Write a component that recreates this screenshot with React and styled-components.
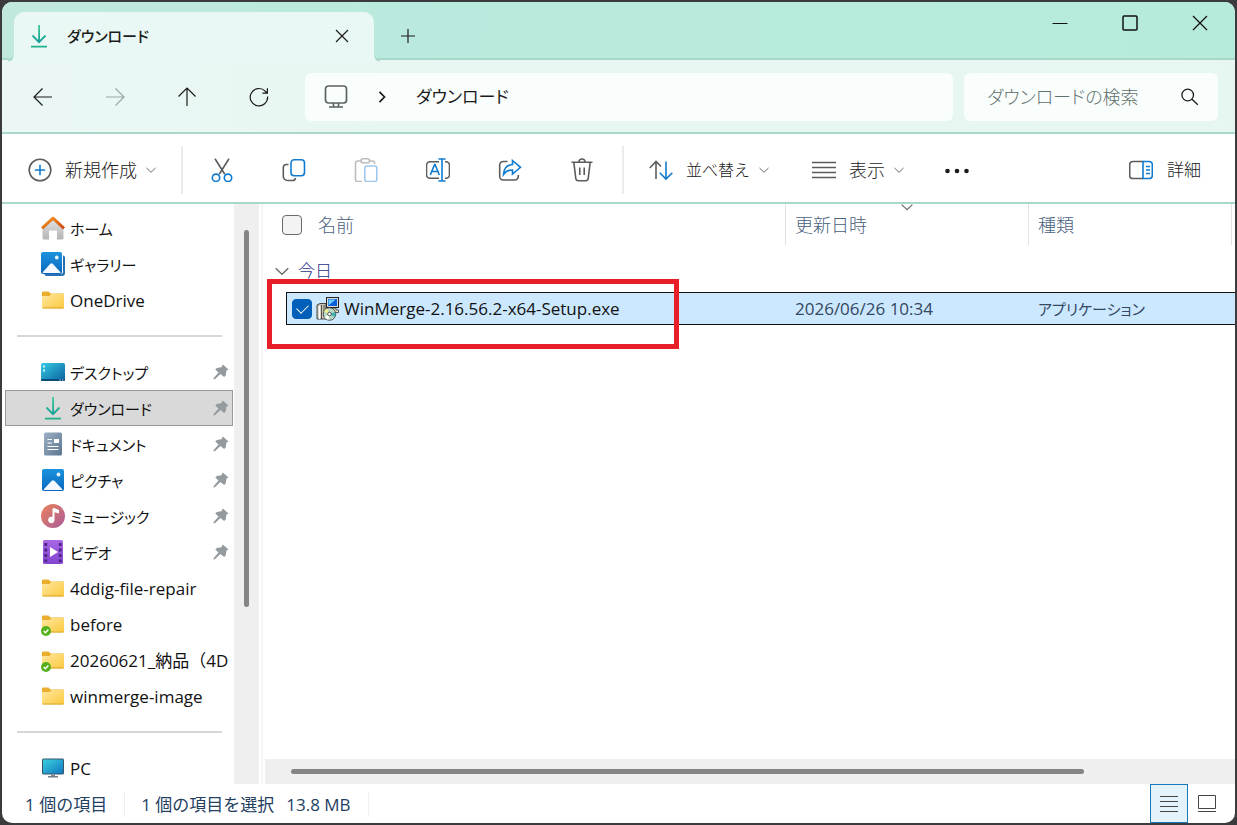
import React from "react";
import styled, { createGlobalStyle, css, ThemeProvider } from "styled-components";

const theme = {
  blue: "#0f7bd0",
  ink: "#1b1b1b",
  grey: "#5c5c5c",
  mint: "#a9d8ca",
  header: "#4a5f7d",
  track: "#efefef",
  thumb: "#858585",
};

const quickAccess = [
  { icon: "home", name: "ホーム", kana: true },
  { icon: "gallery", name: "ギャラリー", kana: true },
  { icon: "folder", name: "OneDrive" },
];

const pinned = [
  { icon: "desktop", name: "デスクトップ", kana: true, pin: true },
  { icon: "download", name: "ダウンロード", kana: true, pin: true, selected: true },
  { icon: "document", name: "ドキュメント", kana: true, pin: true },
  { icon: "picture", name: "ピクチャ", kana: true, pin: true },
  { icon: "music", name: "ミュージック", kana: true, pin: true },
  { icon: "video", name: "ビデオ", kana: true, pin: true },
  { icon: "folder", name: "4ddig-file-repair" },
  { icon: "synced", name: "before" },
  { icon: "synced", name: "20260621_納品（4D" },
  { icon: "folder", name: "winmerge-image" },
];

const App = () => {
  return (
    <ThemeProvider theme={theme}>
      <GlobalStyle />
      <Styles.Window>
        <Styles.TitleBar>
          <Styles.Tab>
            <DownloadIcon />
            <Styles.TabTitle>ダウンロード</Styles.TabTitle>
            <Styles.TabButton aria-label="タブを閉じる">
              <LineIcon size={14} width={1.2} d="M1 1l12 12M13 1L1 13" />
            </Styles.TabButton>
          </Styles.Tab>
          <Styles.NewTab aria-label="新しいタブ">
            <LineIcon size={16} width={1.2} d="M8 1v14M1 8h14" />
          </Styles.NewTab>
          <Styles.Controls>
            <Styles.ControlButton aria-label="最小化">
              <LineIcon size={16} width={1} d="M0.5 8.5h15" />
            </Styles.ControlButton>
            <Styles.ControlButton aria-label="最大化">
              <svg width="16" height="16" viewBox="0 0 16 16" fill="none" stroke="#111" strokeWidth="1.5">
                <rect x="1" y="1" width="14" height="14" rx="1" />
              </svg>
            </Styles.ControlButton>
            <Styles.ControlButton aria-label="閉じる">
              <LineIcon size={16} width={1.3} d="M1 1l14 14M15 1L1 15" />
            </Styles.ControlButton>
          </Styles.Controls>
        </Styles.TitleBar>

        <Styles.NavBar>
          <Styles.NavButton aria-label="戻る">
            <LineIcon size={20} width={1.2} d="M19 10H1.5M9.5 1.5L1 10l8.500 8.500" />
          </Styles.NavButton>
          <Styles.NavButton aria-label="進む" disabled>
            <LineIcon size={20} width={1.2} d="M1 10h17.500M10.500 1.500L19 10l-8.500 8.500" />
          </Styles.NavButton>
          <Styles.NavButton aria-label="上へ">
            <LineIcon size={20} width={1.2} d="M10 19V1.500M1.500 9.500L10 1l8.500 8.500" />
          </Styles.NavButton>
          <Styles.NavButton aria-label="更新">
            <LineIcon size={20} width={1.2} d="M18.600 9.500a8.700 8.700 0 1 1-2.400-5.300L18.200 6M18.400 1.200v5h-5" />
          </Styles.NavButton>
          <Styles.Address>
            <svg width="24" height="24" viewBox="0 0 24 24" fill="none" stroke="#5d6362" strokeWidth="1.7">
              <rect x="1.500" y="1" width="21" height="17" rx="3" />
              <path d="M9.500 18v3.500M14.500 18v3.500M5 22h14" />
            </svg>
            <Styles.Crumb aria-label="PC">
              <LineIcon size={12} width={1.7} d="M3.500 0.800L8.500 6l-5 5.200" />
            </Styles.Crumb>
            <Styles.Place>ダウンロード</Styles.Place>
          </Styles.Address>
          <Styles.Search>
            <input type="text" aria-label="ダウンロードの検索" placeholder="ダウンロードの検索" />
            <LineIcon size={18} width={1.3} d="M12.500 7a5.800 5.800 0 1 1-11.600 0a5.800 5.800 0 0 1 11.600 0M11 11.200l5.800 5.600" />
          </Styles.Search>
        </Styles.NavBar>

        <Styles.ToolBar>
          <Styles.TextButton>
            <Glyph>
              <circle cx="12" cy="12" r="10.800" />
              <path className="accent" d="M12 6.800v10.400M6.800 12h10.400" />
            </Glyph>
            新規作成
            <Chevron />
          </Styles.TextButton>
          <Styles.Divider />
          <Styles.ToolButton aria-label="切り取り">
            <Glyph>
              <path d="M5 0.800l9.800 15.400M19 0.800L9.200 16.200" />
              <g className="accent">
                <circle cx="6" cy="19.800" r="3.700" />
                <circle cx="18" cy="19.800" r="3.700" />
              </g>
            </Glyph>
          </Styles.ToolButton>
          <Styles.ToolButton aria-label="コピー">
            <Glyph>
              <path d="M6.500 6.500H4.500a3.200 3.200 0 0 0-3.200 3.200v8.500a4.300 4.300 0 0 0 4.300 4.300h4.900a3 3 0 0 0 3-2.500" />
              <rect className="accent" x="9" y="1.800" width="13.500" height="16" rx="3.200" />
            </Glyph>
          </Styles.ToolButton>
          <Styles.ToolButton aria-label="貼り付け" disabled>
            <Glyph>
              <path d="M7 3H3.500a2 2 0 0 0-2 2v16.500a2 2 0 0 0 2 2H8M15.500 3h3a2 2 0 0 1 2 2v1" />
              <rect x="7" y="0.800" width="8.500" height="4" rx="2" />
              <rect className="accent" x="10.800" y="8" width="12" height="15.500" rx="2" />
            </Glyph>
          </Styles.ToolButton>
          <Styles.ToolButton aria-label="名前の変更">
            <Glyph>
              <path d="M13 3.800H4a3.500 3.500 0 0 0-3.500 3.500v9.400A3.500 3.500 0 0 0 4 20.200h9M19 3.800h1a3.500 3.500 0 0 1 3.500 3.500v9.400a3.500 3.500 0 0 1-3.500 3.500h-1" />
              <path className="accent" d="M4.300 17L8.600 6.500h.5L13.300 17M5.800 13.500h6M16 1v22M12.500 1h7M12.500 23h7" />
            </Glyph>
          </Styles.ToolButton>
          <Styles.ToolButton aria-label="共有">
            <Glyph>
              <path d="M9.500 3.500H5.200a3.500 3.500 0 0 0-3.500 3.500v11.500A3.500 3.500 0 0 0 5.200 22h11.600a3.500 3.500 0 0 0 3.500-3.500V17" />
              <path className="accent" d="M14.500 2.500l8 6.800-8 6.700v-4c-4-.2-6.500 1-9 4.500.3-5.500 3.500-9.500 9-10z" />
            </Glyph>
          </Styles.ToolButton>
          <Styles.ToolButton aria-label="削除">
            <Glyph>
              <path d="M1.500 4.200h21M3.800 4.200l2 16.300a2.500 2.500 0 0 0 2.500 2.200h7.400a2.500 2.500 0 0 0 2.500-2.200l2-16.300M9 4a3 3 0 0 1 6 0M9.800 9.500v7.500M14.200 9.500v7.500" />
            </Glyph>
          </Styles.ToolButton>
          <Styles.Divider />
          <Styles.TextButton $small>
            <Glyph>
              <path d="M7 21V3.500M0.800 10L7 3.500l5 5" />
              <path className="accent" d="M17 3.500V21M10.800 14.800L17 21l6.300-6.300" />
            </Glyph>
            並べ替え
            <Chevron />
          </Styles.TextButton>
          <Styles.TextButton>
            <Glyph>
              <path d="M0 4.500h24M0 9.500h24M0 14.500h24M0 19.500h24" />
            </Glyph>
            表示
            <Chevron />
          </Styles.TextButton>
          <Styles.ToolButton aria-label="もっと見る" $narrow>
            <svg width="26" height="24" viewBox="0 0 26 24" fill="#1b1b1b">
              <circle cx="3.500" cy="13" r="2.300" />
              <circle cx="13" cy="13" r="2.300" />
              <circle cx="22.500" cy="13" r="2.300" />
            </svg>
          </Styles.ToolButton>
          <Styles.Details>
            <Glyph>
              <path d="M14 3.500H4a3.300 3.300 0 0 0-3.300 3.300v10.400A3.300 3.300 0 0 0 4 20.500h10" />
              <path className="accent" d="M14 3.500h6a3.300 3.300 0 0 1 3.300 3.300v10.400a3.300 3.300 0 0 1-3.300 3.300h-6zM17 8.500h4M17 12h4M17 15.500h4" />
            </Glyph>
            詳細
          </Styles.Details>
        </Styles.ToolBar>

        <Styles.Body>
          <Styles.SideBar aria-label="ナビゲーション">
            {quickAccess.map((item) => <SideItem key={item.name} {...item} />)}
            <Styles.Rule />
            {pinned.map((item) => <SideItem key={item.name} {...item} />)}
            <Styles.Rule />
            <SideItem icon="pc" name="PC" />
          </Styles.SideBar>
          <Styles.VTrack><Styles.VThumb /></Styles.VTrack>

          <Styles.Content>
            <Styles.Files>
              <Styles.Table>
                <colgroup>
                  <col width="23" />
                  <col />
                  <col width="243" />
                  <col width="203" />
                  <col width="4" />
                </colgroup>
                <thead>
                  <tr>
                    <Styles.Th colSpan={2} $first>
                      <Styles.NameHead>
                        <Styles.Check type="checkbox" aria-label="すべて選択" />
                        名前
                      </Styles.NameHead>
                    </Styles.Th>
                    <Styles.Th>
                      更新日時
                      <Styles.SortMark><Chevron size={12} /></Styles.SortMark>
                    </Styles.Th>
                    <Styles.Th>種類</Styles.Th>
                    <Styles.Th />
                  </tr>
                </thead>
                <tbody>
                  <tr>
                    <Styles.GroupCell colSpan={5}>
                      <Styles.GroupButton><Chevron size={14} />今日</Styles.GroupButton>
                    </Styles.GroupCell>
                  </tr>
                  <tr>
                    <td />
                    <Styles.Td $first>
                      <Styles.FileName>
                        <Styles.Check type="checkbox" defaultChecked />
                        <SetupIcon />
                        WinMerge-2.16.56.2-x64-Setup.exe
                      </Styles.FileName>
                    </Styles.Td>
                    <Styles.Td>2026/06/26 10:34</Styles.Td>
                    <Styles.Td $kana>アプリケーション</Styles.Td>
                    <Styles.Td />
                  </tr>
                </tbody>
              </Styles.Table>
              <Styles.Marker />
            </Styles.Files>
            <Styles.HTrack><Styles.HThumb /></Styles.HTrack>
          </Styles.Content>
        </Styles.Body>

        <Styles.StatusBar>
          <Styles.Status>1 個の項目</Styles.Status>
          <Styles.Status>
            <span>1 個の項目を選択</span>
            <span>13.8 MB</span>
          </Styles.Status>
          <Styles.Views>
            <Styles.ViewButton aria-label="詳細表示" $active>
              <LineIcon size={20} width={1} d="M1 2.500h18M1 7.500h18M1 12.500h18M1 17.500h18" />
            </Styles.ViewButton>
            <Styles.ViewButton aria-label="大アイコン">
              <LineIcon size={20} width={1} d="M1.500 1.500h17v13h-17zM1 17.500h18" />
            </Styles.ViewButton>
          </Styles.Views>
        </Styles.StatusBar>
      </Styles.Window>
    </ThemeProvider>
  );
};

export default App;

const SideItem = ({ icon, name, kana, pin, selected }) => {
  const Icon = icons[icon];
  return (
    <Styles.Item href="#" $selected={selected}>
      <Icon />
      <Styles.ItemName $kana={kana}>{name}</Styles.ItemName>
      {pin && <PinIcon />}
    </Styles.Item>
  );
};

// plain stroked icon drawn from one path
const LineIcon = ({ size, d, width = 1.4 }) => (
  <svg width={size} height={size} viewBox={`0 0 ${size} ${size}`} fill="none" stroke="currentColor" strokeWidth={width}>
    <path d={d} />
  </svg>
);

const Chevron = ({ size = 10 }) => (
  <svg width={size} height={size} viewBox="0 0 10 10" fill="none" stroke="#6b6b6b">
    <path d="M0.500 3L5 7.300 9.500 3" />
  </svg>
);

const Glyph = ({ children }) => (
  <Styles.Glyph width="24" height="24" viewBox="0 0 24 24">{children}</Styles.Glyph>
);

const DownloadIcon = () => (
  <svg width="24" height="24" viewBox="0 0 24 24" fill="none" strokeWidth="1.800">
    <defs>
      <linearGradient id="dl" x1="0" y1="0" x2="0" y2="24" gradientUnits="userSpaceOnUse">
        <stop offset="0" stopColor="#3fcf9b" />
        <stop offset="0.800" stopColor="#149c96" />
      </linearGradient>
    </defs>
    <path stroke="url(#dl)" d="M12.100 1v17M5.500 11.500l6.500 6.700 6.500-6.700" />
    <path stroke="#22b08c" d="M4 22.600h16" />
  </svg>
);

const PinIcon = () => (
  <svg width="16" height="16" viewBox="0 0 16 16" fill="#949b9f">
    <path d="M9.800 0.600l5.700 4.900-2 1.100-.8 4.800-1.600 1.600-3.600-3.100-5.600 5.400-1.500.3.300-1.500 4.800-5.700L2.300 5.500l1.500-1.600 4.500-.6z" />
  </svg>
);

const Folder = () => (
  <>
    <defs>
      <linearGradient id="folder" x1="0" y1="0" x2="1" y2="1">
        <stop offset="0" stopColor="#ffe7a0" />
        <stop offset="1" stopColor="#fbc93d" />
      </linearGradient>
    </defs>
    <path fill="#e9ae2c" d="M1 4.500a1 1 0 0 1 1-1h5.500l2 2H22a1 1 0 0 1 1 1V9H1z" />
    <path fill="url(#folder)" d="M1 8h7.500l2-2H22a1 1 0 0 1 1 1v12.500a1 1 0 0 1-1 1H2a1 1 0 0 1-1-1z" />
    <path stroke="#dda52e" d="M1.500 20h21" />
  </>
);

const Picture = () => (
  <>
    <defs>
      <linearGradient id="pic" x1="0" y1="0" x2="0" y2="1">
        <stop offset="0" stopColor="#1b93de" />
        <stop offset="1" stopColor="#0a67bd" />
      </linearGradient>
    </defs>
    <rect x="1" y="1" width="22" height="22" rx="2" fill="url(#pic)" />
    <path fill="#f3f9ff" d="M2.500 21.500l8.300-8.700a1.800 1.800 0 0 1 2.500 0l8.300 8.700a2 2 0 0 1-1 .5H3.500a2 2 0 0 1-1-.5z" />
    <circle cx="17.500" cy="6.500" r="1.900" fill="#e6f4ff" />
  </>
);

const ItemSvg = ({ children }) => (
  <svg width="24" height="24" viewBox="0 0 24 24" fill="none">{children}</svg>
);

const icons = {
  download: DownloadIcon,
  picture: () => <ItemSvg><Picture /></ItemSvg>,
  folder: () => <ItemSvg><Folder /></ItemSvg>,
  synced: () => (
    <ItemSvg>
      <Folder />
      <circle cx="5" cy="19" r="5" fill="#56b01c" />
      <path stroke="#fff" strokeWidth="1.500" d="M2.700 19l1.700 1.700 3-3.200" />
    </ItemSvg>
  ),
  home: () => (
    <ItemSvg>
      <defs>
        <linearGradient id="wall" x1="0" y1="0" x2="0" y2="1">
          <stop offset="0" stopColor="#e6e6e6" />
          <stop offset="1" stopColor="#b3b3b3" />
        </linearGradient>
        <linearGradient id="roof" x1="0" y1="0" x2="1" y2="1">
          <stop offset="0" stopColor="#f39a22" />
          <stop offset="1" stopColor="#cf4a12" />
        </linearGradient>
      </defs>
      <path fill="url(#wall)" d="M1.500 11.500L12 2l10.500 9.500V22a1.500 1.500 0 0 1-1.500 1.500h-5v-9H8v9H3A1.500 1.500 0 0 1 1.500 22z" />
      <path stroke="url(#roof)" strokeWidth="3" strokeLinejoin="round" d="M1 12.300L12 2.200l11 10.100" />
    </ItemSvg>
  ),
  gallery: () => (
    <ItemSvg>
      <path fill="#2a6fb0" d="M22 3.500a2 2 0 0 1 2 2V21a3 3 0 0 1-3 3H5.500a2 2 0 0 1-2-2H20a2 2 0 0 0 2-2z" />
      <svg x="0" y="0" width="21" height="22" viewBox="1 1 22 22" preserveAspectRatio="none"><Picture /></svg>
    </ItemSvg>
  ),
  desktop: () => (
    <ItemSvg>
      <defs>
        <linearGradient id="desk" x1="0" y1="0" x2="1" y2="1">
          <stop offset="0" stopColor="#35cbe3" />
          <stop offset="1" stopColor="#0b5f9e" />
        </linearGradient>
      </defs>
      <rect y="3" width="24" height="18" rx="1.500" fill="url(#desk)" />
      <path fill="#c9f5fb" d="M2 5.500h2v2H2zM2 9.500h2v2H2z" />
      <path fill="#0a4c7c" d="M0 19h24v.5a1.500 1.500 0 0 1-1.500 1.500h-21A1.500 1.500 0 0 1 0 19.500z" />
      <path fill="#bfe7f7" d="M18.500 19.500h1.300v1h-1.300zM21 19.500h1.300v1H21z" />
    </ItemSvg>
  ),
  document: () => (
    <ItemSvg>
      <defs>
        <linearGradient id="doc" x1="0" y1="0" x2="1" y2="1">
          <stop offset="0" stopColor="#9cb0c6" />
          <stop offset="1" stopColor="#5c7690" />
        </linearGradient>
      </defs>
      <rect x="3" y="0.500" width="18" height="23" rx="1.500" fill="url(#doc)" />
      <path stroke="#fff" strokeWidth="1.200" d="M6.500 7.500h4.500M6.500 11h4.500M6.500 14.500h11M6.500 17.500h11" />
      <rect x="13" y="7" width="5" height="4" fill="#fff" />
    </ItemSvg>
  ),
  music: () => (
    <ItemSvg>
      <defs>
        <linearGradient id="music" x1="0" y1="0" x2="1" y2="1">
          <stop offset="0" stopColor="#ec8458" />
          <stop offset="1" stopColor="#a95a9c" />
        </linearGradient>
      </defs>
      <circle cx="12" cy="12" r="12" fill="url(#music)" />
      <path fill="#fff" d="M11.500 4.500l1.500-.5 5 2v3.500l-4.500-1.200v7.700a3.200 3.200 0 1 1-2-3z" />
    </ItemSvg>
  ),
  video: () => (
    <ItemSvg>
      <defs>
        <linearGradient id="video" x1="0" y1="0" x2="0" y2="1">
          <stop offset="0" stopColor="#a866e6" />
          <stop offset="1" stopColor="#8344cf" />
        </linearGradient>
      </defs>
      <rect x="2" width="20" height="24" rx="1.500" fill="url(#video)" />
      <path stroke="#4b2583" strokeWidth="2.800" strokeDasharray="3 2.500" d="M4.800 3v19M19.200 3v19" />
      <path fill="#fff" d="M9 7l8 5-8 5z" />
    </ItemSvg>
  ),
  pc: () => (
    <ItemSvg>
      <defs>
        <linearGradient id="pc" x1="0" y1="0" x2="1" y2="1">
          <stop offset="0" stopColor="#3dd2de" />
          <stop offset="1" stopColor="#0f75c0" />
        </linearGradient>
      </defs>
      <rect x="1.500" y="3" width="21" height="15" rx="0.500" fill="url(#pc)" stroke="#3b5567" />
      <path fill="#7f8b93" d="M10 18.500h4v2h-4z" />
      <path stroke="#5d6d78" strokeWidth="1.300" d="M7 20.800h10" />
    </ItemSvg>
  ),
};

// installer: box, disc and monitor
const SetupIcon = () => (
  <svg width="24" height="24" viewBox="0 0 24 24">
    <path fill="#c9c5b4" stroke="#222" strokeWidth="0.800" d="M1 8l3-1.500h6V22H1z" />
    <path stroke="#fff" strokeWidth="1.500" d="M3.500 9v13" />
    <path stroke="#333" strokeWidth="0.800" d="M5.500 8v14M8 8v6" />
    <rect x="10.500" y="0.500" width="12" height="10" fill="#d8d8d8" stroke="#222" />
    <rect x="12" y="2" width="9" height="7" fill="#0b5fd8" />
    <path fill="#6fd0ff" d="M12.500 2.500h7l-7 6z" />
    <path fill="#e8e4c8" stroke="#222" strokeWidth="0.700" d="M13 11h7v2h2.500v2.500H14z" />
    <circle cx="13.500" cy="17" r="6.300" fill="#b9d7c4" stroke="#333" strokeWidth="0.800" />
    <path fill="#eef08a" d="M13.500 17L8 14.500a6 6 0 0 1 3-3z" />
    <path fill="#35b4b0" d="M13.500 17l5.600-2a6 6 0 0 1-.6 5z" />
    <path fill="#fff" d="M13.500 17l-1 5.800a6 6 0 0 1-4-2.500z" />
    <circle cx="13.500" cy="17" r="1.800" fill="#fff" stroke="#333" strokeWidth="0.800" />
  </svg>
);

const GlobalStyle = createGlobalStyle`
  * {
    box-sizing: border-box;
  }
  body {
    margin: 0;
    background: #3b3b3d;
    color: #1b1b1b;
    font: 17px/24px "Open Sans", "Noto Sans CJK JP", sans-serif;
  }
  button, input {
    font: inherit;
    font-feature-settings: inherit;
    color: inherit;
    border: 0;
    margin: 0;
    padding: 0;
    background: none;
  }
  svg {
    display: block;
    flex: none;
  }
`;

const flexCenter = css`
  display: flex;
  align-items: center;
  justify-content: center;
`;

// katakana labels are set with proportional metrics
const kanaText = css`
  font-size: 15px;
  font-feature-settings: "palt";
`;

const Styles = {
  Window: styled.main`
  display: flex;
  flex-direction: column;
  height: calc(100vh - 4px);
  margin: 2px;
  border-radius: 10px;
  overflow: hidden;
  background: #fff;
  `,

  TitleBar: styled.header`
  display: flex;
  height: 58px;
  padding-left: 12px;
  border-bottom: 2px solid ${({ theme }) => theme.mint};
  background: linear-gradient(100deg, #c1e8df, #b8eade 40%, #b6ebdb);
  `,
  Tab: styled.div`
  position: relative;
  display: flex;
  align-items: center;
  gap: 16px;
  width: 360px;
  height: 48px;
  margin-top: 10px;
  padding: 0 12px 0 13px;
  border-radius: 10px 10px 0 0;
  background: #e9f8f4;
  box-shadow: 0 2px 0 #e9f8f4;
  /* curved feet that join the tab to the bar below */
  &::before, &::after {
    content: "";
    position: absolute;
    bottom: -2px;
    width: 6px;
    height: 6px;
  }
  &::before {
    right: 100%;
    background: radial-gradient(circle at 0 0, transparent 4px, ${({ theme }) => theme.mint} 5px, #e9f8f4 6px);
  }
  &::after {
    left: 100%;
    background: radial-gradient(circle at 100% 0, transparent 4px, ${({ theme }) => theme.mint} 5px, #e9f8f4 6px);
  }
  `,
  TabTitle: styled.span`
  flex: 1;
  ${kanaText}
  font-weight: 500;
  `,
  TabButton: styled.button`
  ${flexCenter}
  width: 40px;
  height: 32px;
  `,
  NewTab: styled.button`
  ${flexCenter}
  width: 68px;
  padding-top: 12px;
  `,
  Controls: styled.div`
  display: flex;
  align-items: flex-start;
  margin-left: auto;
  `,
  ControlButton: styled.button`
  ${flexCenter}
  width: 70px;
  height: 42px;
  color: #111;
  `,

  NavBar: styled.nav`
  display: flex;
  align-items: center;
  height: 74px;
  padding: 1px 17px 0 5px;
  border-bottom: 2px solid ${({ theme }) => theme.mint};
  background: linear-gradient(90deg, #eaf7f4, #e6f6f1);
  `,
  NavButton: styled.button`
  ${flexCenter}
  width: 72px;
  height: 48px;
  &:disabled {
    color: #9aa9a5;
  }
  `,
  Address: styled.div`
  display: flex;
  align-items: center;
  flex: 1;
  height: 48px;
  margin-left: 10px;
  padding-left: 19px;
  border-radius: 6px;
  background: #f9fdfc;
  `,
  Crumb: styled.button`
  ${flexCenter}
  width: 68px;
  height: 32px;
  `,
  Place: styled.span`
  ${kanaText}
  font-size: 17px;
  `,
  Search: styled.label`
  display: flex;
  align-items: center;
  width: 254px;
  height: 48px;
  margin-left: 11px;
  padding: 0 19px 0 23px;
  border-radius: 6px;
  background: #f9fdfc;
  ${kanaText}
  font-size: 18px;
  input {
    flex: 1;
    min-width: 0;
    outline: 0;
  }
  input::placeholder {
    color: #60706c;
    font-weight: 300;
    opacity: 1;
  }
  `,

  ToolBar: styled.div`
  display: flex;
  align-items: center;
  height: 70px;
  border-bottom: 2px solid ${({ theme }) => theme.mint};
  padding: 3px 34px 0 4px;
  font-weight: 300;
  `,
  Glyph: styled.svg`
  fill: none;
  stroke: ${({ theme }) => theme.grey};
  stroke-width: 1.6;
  .accent {
    stroke: ${({ theme }) => theme.blue};
  }
  `,
  TextButton: styled.button`
  display: flex;
  align-items: center;
  gap: 13px;
  height: 48px;
  padding: 0 21px 0 22px;
  font-size: ${({ $small }) => ($small ? "16px" : "18px")};
  white-space: nowrap;
  svg:last-child {
    margin-left: -4px;
  }
  `,
  ToolButton: styled.button`
  ${flexCenter}
  width: ${({ $narrow }) => ($narrow ? "64px" : "72px")};
  height: 48px;
  &:disabled svg {
    opacity: 0.4;
  }
  `,
  Details: styled.button`
  ${flexCenter}
  gap: 14px;
  height: 48px;
  margin-left: auto;
  `,
  Divider: styled.span`
  width: 2px;
  height: 48px;
  margin: 0 3px 0 4px;
  background: #ebebeb;
  `,

  Body: styled.div`
  display: flex;
  flex: 1;
  min-height: 0;
  `,
  SideBar: styled.nav`
  width: 232px;
  padding: 6px 1px 0 3px;
  overflow: hidden;
  `,
  Item: styled.a`
  display: flex;
  align-items: center;
  gap: 5px;
  height: 36px;
  padding: 0 3px 0 35px;
  border: 1px solid ${({ $selected }) => ($selected ? "#999" : "transparent")};
  background: ${({ $selected }) => ($selected ? "#d9d9d9" : "none")};
  color: #111;
  text-decoration: none;
  white-space: nowrap;
  `,
  ItemName: styled.span`
  flex: 1;
  padding-top: 2px;
  ${({ $kana }) => $kana && kanaText}
  `,
  Rule: styled.hr`
  height: 2px;
  margin: 17px 11px 17px 12px;
  border: 0;
  background: #d6d6d6;
  `,
  VTrack: styled.div`
  width: 25px;
  padding: 26px 10px 0;
  background: ${({ theme }) => theme.track};
  `,
  VThumb: styled.div`
  height: 68%;
  border-radius: 3px;
  background: ${({ theme }) => theme.thumb};
  `,

  Content: styled.section`
  display: flex;
  flex-direction: column;
  flex: 1;
  min-width: 0;
  margin-left: 2px;
  border-left: 2px solid #f5f5f5;
  `,
  Files: styled.div`
  position: relative;
  flex: 1;
  `,
  Table: styled.table`
  width: 100%;
  table-layout: fixed;
  border-collapse: separate;
  border-spacing: 0;
  `,
  Th: styled.th`
  position: relative;
  height: 41px;
  padding: 0 0 0 ${({ $first }) => ($first ? "19px" : "9px")};
  border-left: ${({ $first }) => ($first ? "0" : "1px solid #e2e2e2")};
  color: ${({ theme }) => theme.header};
  font-size: 18px;
  font-weight: 300;
  text-align: left;
  `,
  NameHead: styled.label`
  display: flex;
  align-items: center;
  gap: 16px;
  `,
  SortMark: styled.span`
  position: absolute;
  top: -3px;
  left: 50%;
  transform: translateX(-50%);
  `,
  Check: styled.input`
  appearance: none;
  flex: none;
  width: 20px;
  height: 20px;
  border: 1px solid #6a6a6a;
  border-radius: 4px;
  background: #f3f3f3;
  &:checked {
    border-color: #005fb8;
    background: #005fb8;
  }
  &:checked::after {
    content: "";
    display: block;
    width: 10px;
    height: 6px;
    margin: 4px;
    border: solid #fff;
    border-width: 0 0 1px 1px;
    transform: rotate(-45deg);
  }
  `,
  GroupCell: styled.td`
  height: 47px;
  padding: 4px 0 0 12px;
  `,
  GroupButton: styled.button`
  display: flex;
  align-items: center;
  gap: 9px;
  color: #1e3287;
  font-weight: 300;
  `,
  Td: styled.td`
  height: 33px;
  padding: 1px 0 0 ${({ $first }) => ($first ? "5px" : "10px")};
  border: solid #111;
  border-width: 1px 0 1px ${({ $first }) => ($first ? "1px" : "0")};
  background: #cce8ff;
  color: ${({ $first }) => ($first ? "#111" : "#33475f")};
  white-space: nowrap;
  ${({ $kana }) => $kana && kanaText}
  `,
  FileName: styled.label`
  display: flex;
  align-items: center;
  gap: 4px;
  `,
  Marker: styled.div`
  position: absolute;
  top: 75px;
  left: 4px;
  width: 412px;
  height: 70px;
  border: 5px solid #e81f28;
  pointer-events: none;
  `,
  HTrack: styled.div`
  height: 25px;
  margin-left: 2px;
  padding: 10px 0 0 26px;
  background: ${({ theme }) => theme.track};
  `,
  HThumb: styled.div`
  width: 84%;
  height: 5px;
  border-radius: 3px;
  background: ${({ theme }) => theme.thumb};
  `,

  StatusBar: styled.footer`
  display: flex;
  align-items: center;
  height: 39px;
  padding: 0 9px 0 7px;
  color: #24405f;
  `,
  Status: styled.div`
  display: flex;
  gap: 12px;
  padding: 2px 17px 0 16px;
  border-right: 1px solid #f0f0f0;
  white-space: nowrap;
  `,
  Views: styled.div`
  display: flex;
  height: 39px;
  margin-left: auto;
  `,
  ViewButton: styled.button`
  ${flexCenter}
  width: 38px;
  color: #444;
  border: ${({ $active }) => ($active ? "1px solid #1978b8" : "0")};
  background: ${({ $active }) => ($active ? "#e4f2fc" : "none")};
  `,
};
